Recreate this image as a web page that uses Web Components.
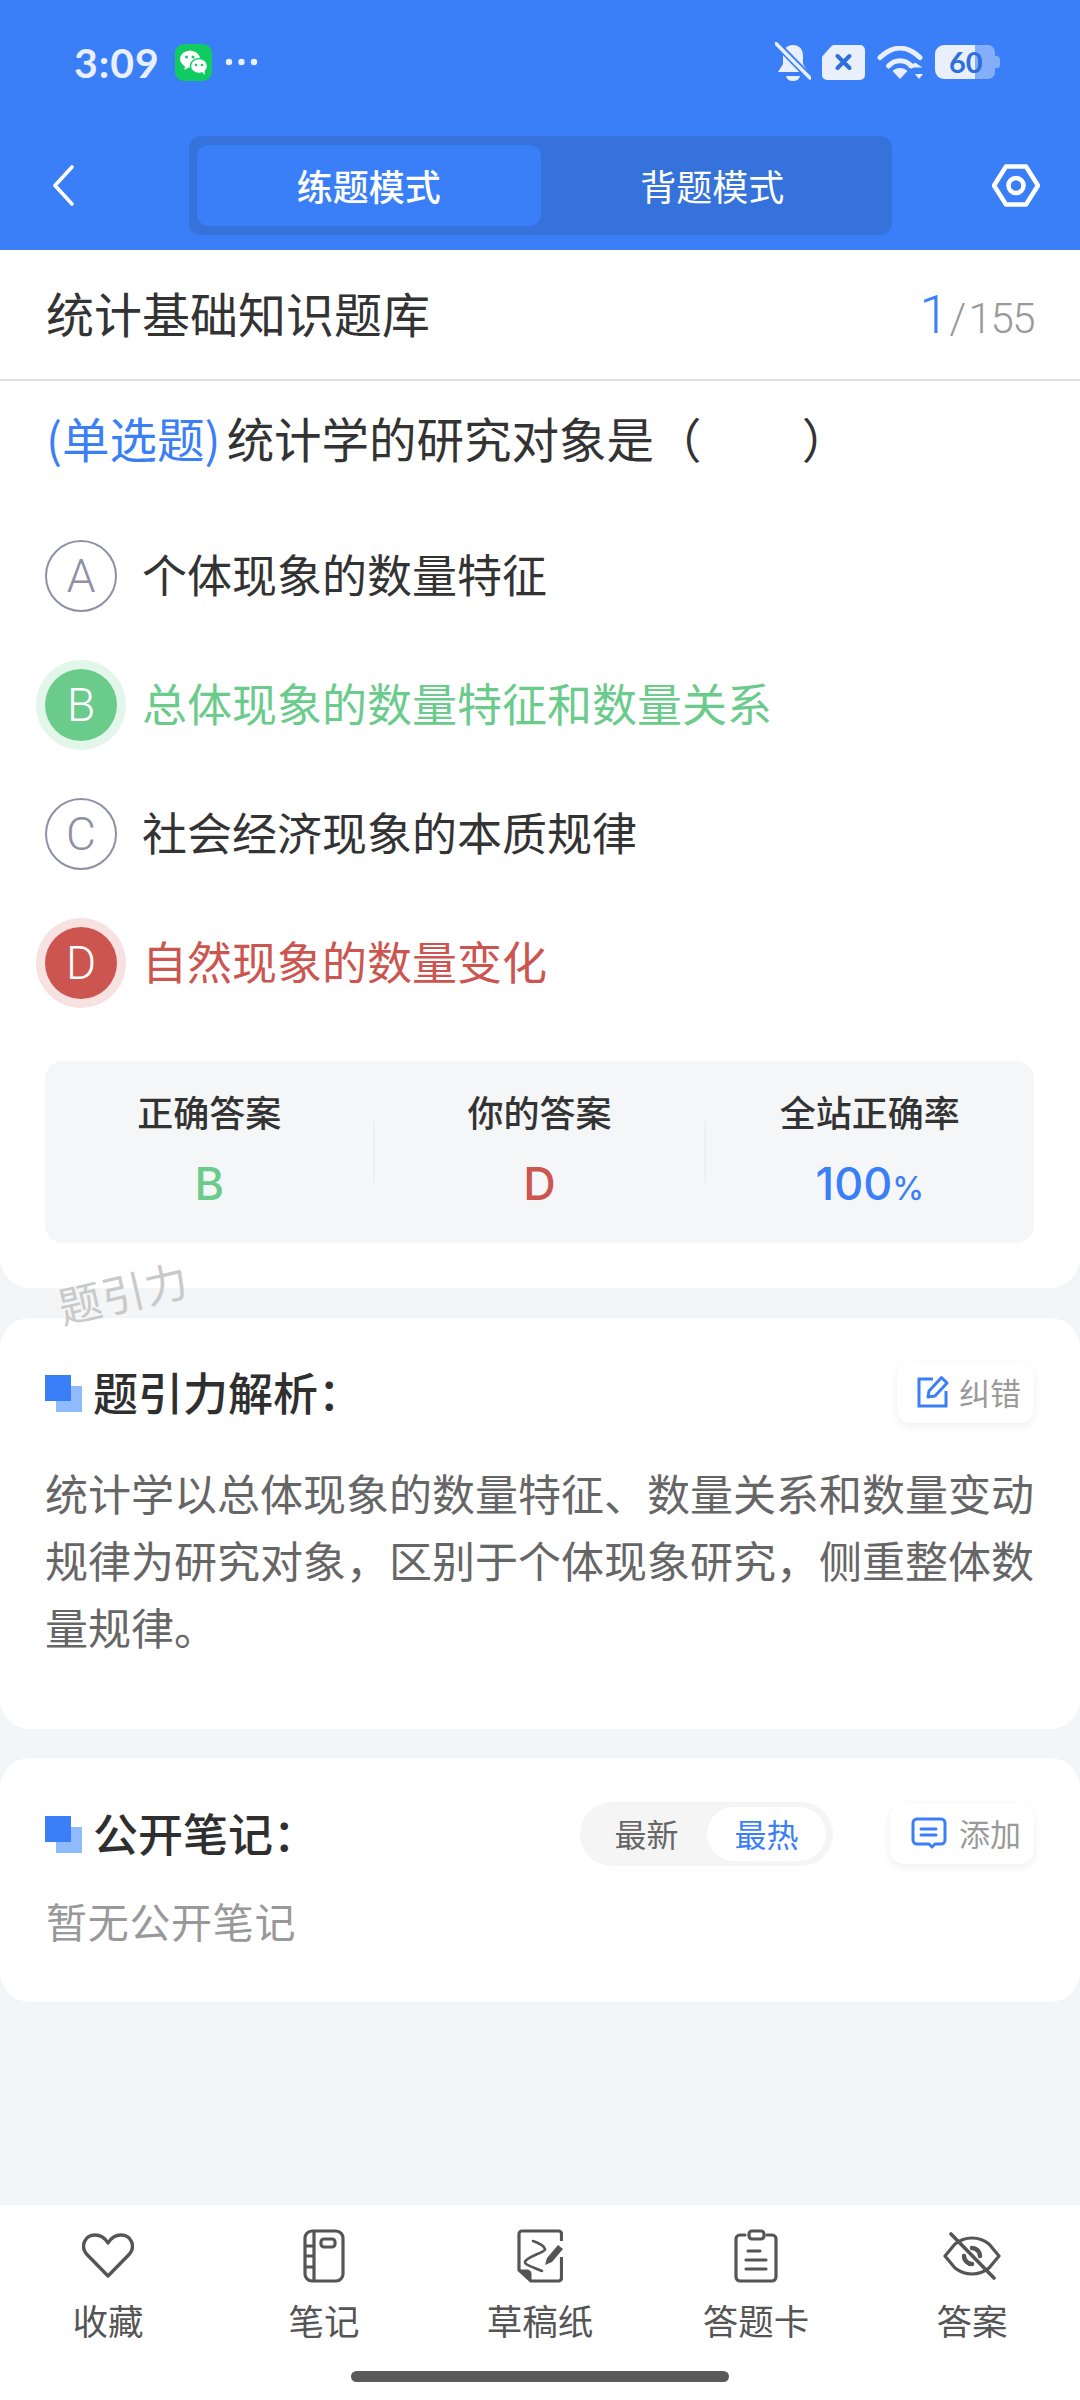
<!DOCTYPE html>
<html lang="zh">
<head>
<meta charset="utf-8">
<title>统计基础知识题库</title>
<style>
  html, body { margin: 0; padding: 0; }
  body {
    width: 1080px;
    height: 2400px;
    overflow: hidden;
    background: #f4f5f7;
    font-family: "Noto Sans CJK SC", "Noto Sans", sans-serif;
  }
  quiz-app { height: 2400px; }
</style>
</head>
<body>
<quiz-app></quiz-app>

<script>
const CJK = `"Noto Sans CJK SC", "Noto Sans", sans-serif`;

// Top blue area: status bar + mode switch
class StatusBar extends HTMLElement {
  constructor() {
    super();
    this.attachShadow({ mode: "open" });
  }
  connectedCallback() {
    this.shadowRoot.innerHTML = `
      <style>
        :host { display: flex; align-items: center; height: 124px; padding: 0 80px 0 74px; box-sizing: border-box; color: #e9effd; }
        .time { font: 700 41px/1 Lato, sans-serif; width: 88px; letter-spacing: 1px; }
        .wechat { margin-left: 13px; display: block; }
        .dots { margin-left: 13px; display: block; }
        .right { margin-left: auto; display: flex; align-items: center; }
        .right svg { display: block; }
        .sim { margin-left: 11px; }
        .wifi { margin-left: 12px; }
        .batt { margin-left: 11px; }
        .batt text { font: 700 29px Lato, sans-serif; fill: #2f6fdc; }
      </style>
      <span class="time">3:09</span>
      <svg class="wechat" width="37" height="37" viewBox="0 0 37 37">
        <rect width="37" height="37" rx="9" fill="#0fcb62"/>
        <ellipse cx="15" cy="15" rx="10" ry="8.6" fill="#fff"/>
        <path d="M10 21l-.5 5 5-3z" fill="#fff"/>
        <ellipse cx="24" cy="22" rx="8.6" ry="7.4" fill="#fff" stroke="#0fcb62" stroke-width="1.4"/>
        <path d="M27 28l3 3-.4-5z" fill="#fff"/>
        <circle cx="11.5" cy="13" r="1.5" fill="#0fcb62"/><circle cx="18" cy="13" r="1.5" fill="#0fcb62"/>
        <circle cx="21" cy="21" r="1.3" fill="#0fcb62"/><circle cx="27" cy="21" r="1.3" fill="#0fcb62"/>
      </svg>
      <svg class="dots" width="33" height="8" viewBox="0 0 33 8" fill="#e9effd">
        <circle cx="4" cy="4" r="3.2"/><circle cx="16.5" cy="4" r="3.2"/><circle cx="29" cy="4" r="3.2"/>
      </svg>
      <div class="right">
        <svg width="36" height="40" viewBox="0 0 36 40">
          <path d="M18 3c7 0 10 5 10 11v8l5 8H3l5-8v-8c0-6 3-11 10-11z" fill="#e9effd"/>
          <path d="M11 34h14c-1 4-4 5-7 5s-6-1-7-5z" fill="#e9effd"/>
          <path d="M-2 -2L35 36" stroke="#3b7ff8" stroke-width="7"/>
          <path d="M1 1.500L35 36" stroke="#e9effd" stroke-width="3.400" stroke-linecap="round"/>
        </svg>
        <svg class="sim" width="43" height="35" viewBox="0 0 43 35">
          <path d="M12 0h26a5 5 0 0 1 5 5v25a5 5 0 0 1-5 5H5a5 5 0 0 1-5-5V13a4 4 0 0 1 1.500-3L9 1.500A4 4 0 0 1 12 0z" fill="#e9effd"/>
          <path d="M15.500 11l12 12M27.500 11l-12 12" stroke="#2f6fdc" stroke-width="4" stroke-linecap="round"/>
        </svg>
        <svg class="wifi" width="47" height="33" viewBox="0 0 47 33">
          <path d="M3 11.500C16 -1 30 -1 43 11.500" fill="none" stroke="#e9effd" stroke-width="5" stroke-linecap="round"/>
          <path d="M11.500 20C18 13 28 13 34.500 20" fill="none" stroke="#e9effd" stroke-width="5" stroke-linecap="round"/>
          <path d="M15.500 25c4-4 11-4 15 0l-7.500 8z" fill="#e9effd"/>
          <path d="M38.500 20.500l8 5.500h-16z" fill="#e9effd" transform="translate(3.500 -2) scale(.9)"/>
          <path d="M38 28h8l-4 5z" fill="#e9effd"/>
        </svg>
        <svg class="batt" width="65" height="34" viewBox="0 0 65 34">
          <path d="M40 0h13a7 7 0 0 1 7 7v20a7 7 0 0 1-7 7H40z" fill="#e9effd" opacity=".42"/>
          <path d="M60 11h1.500a3.500 3.500 0 0 1 3.500 3.500v5a3.500 3.500 0 0 1-3.500 3.500H60z" fill="#e9effd" opacity=".42"/>
          <path d="M9 0h31v34H9a9 9 0 0 1-9-9V9a9 9 0 0 1 9-9z" fill="#e9effd"/>
          <text x="14" y="28">60</text>
        </svg>
      </div>
    `;
  }
}

class ModeHeader extends HTMLElement {
  constructor() {
    super();
    this.attachShadow({ mode: "open" });
  }
  connectedCallback() {
    this.shadowRoot.innerHTML = `
      <style>
        :host { display: block; background: #3b7ff8; height: 250px; font-family: ${CJK}; }
        .row { display: flex; align-items: center; height: 99px; margin-top: 12px; padding: 0 40px 0 52px; }
        .back, .gear { display: block; flex: none; }
        .seg {
          display: flex; box-sizing: border-box; width: 703px; height: 99px; margin-left: 115px;
          padding: 9px 8px; gap: 0; background: #3672dc; border-radius: 12px;
        }
        .seg span { display: flex; align-items: center; justify-content: center; width: 344px; padding-bottom: 2px; box-sizing: border-box; border-radius: 12px; color: #fff; font-size: 36px; font-weight: 400; }
        .seg .on { background: #3b7ff8; font-weight: 500; }
        .gear { margin-left: 100px; }
      </style>
      <status-bar></status-bar>
      <div class="row">
        <svg class="back" width="22" height="41" viewBox="0 0 22 41"><path d="M20 2L3 20.500 20 39" fill="none" stroke="#fff" stroke-width="3.600" stroke-linecap="round" stroke-linejoin="round"/></svg>
        <div class="seg"><span class="on">练题模式</span><span>背题模式</span></div>
        <svg class="gear" width="48" height="43" viewBox="0 0 48 43"><path d="M14 2.500h20l12 19-12 19H14L2 21.500z" fill="none" stroke="#fff" stroke-width="4.500" stroke-linejoin="round"/><circle cx="24" cy="21.500" r="7.500" fill="none" stroke="#fff" stroke-width="4.500"/></svg>
      </div>
    `;
  }
}

// One answer option: letter circle + text
class QuizOption extends HTMLElement {
  constructor() {
    super();
    this.attachShadow({ mode: "open" });
  }
  connectedCallback() {
    const letter = this.getAttribute("letter");
    this.shadowRoot.innerHTML = `
      <style>
        :host { display: flex; align-items: center; height: 129px; --c: #333; --ring: none; }
        :host([state="right"]) { --c: #6acb8b; }
        :host([state="wrong"]) { --c: #cc5550; }
        .dot {
          flex: none; box-sizing: border-box; width: 72px; height: 72px; border-radius: 50%;
          display: flex; align-items: center; justify-content: center;
          border: 2px solid #8f90a6; color: #8f90a6; font: 300 46px/1 Roboto, sans-serif;
        }
        :host([state="right"]) .dot { background: #6acb8b; border: 0; color: #fff; box-shadow: 0 0 0 9px #e2f6e9; }
        :host([state="wrong"]) .dot { background: #cc5550; border: 0; color: #fff; box-shadow: 0 0 0 9px #f7e1e1; }
        .txt { margin-left: 25px; padding-bottom: 5px; font-size: 45px; line-height: 1; color: var(--c); }
      </style>
      <span class="dot">${letter}</span>
      <span class="txt"><slot></slot></span>
    `;
  }
}

class AnswerStat extends HTMLElement {
  constructor() {
    super();
    this.attachShadow({ mode: "open" });
  }
  connectedCallback() {
    this.shadowRoot.innerHTML = `
      <style>
        :host { display: flex; flex: 1; flex-direction: column; align-items: center; color: #333; }
        .label { font-size: 36px; font-weight: 500; line-height: 40px; margin-top: 30px; }
        .val { font: 500 45px/50px Inter, Lato, sans-serif; margin-top: 28px; color: var(--val, #333); }
        ::slotted(small) { font-size: 32px; }
      </style>
      <span class="label">${this.getAttribute("label")}</span>
      <span class="val"><slot></slot></span>
    `;
  }
}

// White card with rounded corners
class WhiteCard extends HTMLElement {
  constructor() {
    super();
    this.attachShadow({ mode: "open" });
    this.shadowRoot.innerHTML = `
      <style>
        :host { display: block; background: #fff; border-radius: 30px; box-sizing: border-box; }
        :host([flat]) { border-radius: 0 0 30px 30px; }
      </style>
      <slot></slot>
    `;
  }
}

// Blue double-square section title
class SectionTitle extends HTMLElement {
  constructor() {
    super();
    this.attachShadow({ mode: "open" });
    this.shadowRoot.innerHTML = `
      <style>
        :host { display: flex; align-items: center; font-size: 45px; font-weight: 500; color: #2f2f2f; line-height: 1; }
        .mark { position: relative; flex: none; width: 37px; height: 37px; margin-right: 11px; }
        .mark i { position: absolute; display: block; width: 26px; height: 26px; }
        .mark .a { right: 0; bottom: 0; background: #8fbafc; }
        .mark .b { left: 0; top: 0; background: #3b7ff8; }
        .txt { padding-bottom: 3px; }
      </style>
      <span class="mark"><i class="a"></i><i class="b"></i></span>
      <span class="txt"><slot></slot></span>
    `;
  }
}

class ActionChip extends HTMLElement {
  constructor() {
    super();
    this.attachShadow({ mode: "open" });
    this.shadowRoot.innerHTML = `
      <style>
        :host {
          display: flex; align-items: center; justify-content: flex-end; box-sizing: border-box; height: 60px; padding: 0 13px 3px 0;
          background: #fff; border-radius: 14px; box-shadow: 0 3px 10px rgba(0,0,0,.07);
          font-size: 31px; color: #9a9a9a; line-height: 1; gap: var(--gap, 9px);
        }
        ::slotted(svg) { display: block; flex: none; }
      </style>
      <slot></slot>
    `;
  }
}

class SortToggle extends HTMLElement {
  constructor() {
    super();
    this.attachShadow({ mode: "open" });
    this.shadowRoot.innerHTML = `
      <style>
        :host { display: flex; box-sizing: border-box; width: 253px; height: 64px; padding: 5px 7px 5px 0; background: #f5f5f5; border-radius: 32px; font-size: 32px; line-height: 1; }
        span { display: flex; align-items: center; justify-content: center; padding-bottom: 2px; box-sizing: border-box; }
        .off { width: 127px; color: #666; padding-left: 6px; }
        .on { width: 119px; background: #fff; border-radius: 27px; color: #3b7ff8; }
      </style>
      <span class="off">最新</span><span class="on">最热</span>
    `;
  }
}

class TabItem extends HTMLElement {
  constructor() {
    super();
    this.attachShadow({ mode: "open" });
    this.shadowRoot.innerHTML = `
      <style>
        :host { display: flex; flex: 1; flex-direction: column; align-items: center; color: #555; }
        .ico { display: flex; align-items: center; justify-content: center; height: 54px; }
        .lb { font-size: 35.500px; line-height: 40px; margin-top: 17px; }
      </style>
      <span class="ico"><slot name="icon"></slot></span>
      <span class="lb"><slot></slot></span>
    `;
  }
}

class TabBar extends HTMLElement {
  constructor() {
    super();
    this.attachShadow({ mode: "open" });
    this.shadowRoot.innerHTML = `
      <style>
        :host { display: block; box-sizing: border-box; height: 195px; background: #fff; padding-top: 24px; }
        .items { display: flex; height: 111px; }
        .home { width: 378px; height: 11px; margin: 31px auto 0; border-radius: 6px; background: #5a5a5a; }
      </style>
      <div class="items"><slot></slot></div>
      <div class="home"></div>
    `;
  }
}

class QuizApp extends HTMLElement {
  constructor() {
    super();
    this.attachShadow({ mode: "open" });
    this.shadowRoot.innerHTML = `
      <style>
        :host { display: flex; flex-direction: column; position: relative; width: 1080px; height: 2400px; background: #f4f5f7; font-family: ${CJK}; }
        .head { display: flex; align-items: center; justify-content: space-between; box-sizing: border-box; height: 131px; padding: 0 46px; border-bottom: 2px solid #dedfe1; }
        .book { font-size: 48px; color: #333; line-height: 1; padding-bottom: 5px; }
        .count { display: flex; align-items: baseline; font-family: Roboto, sans-serif; font-weight: 300; font-size: 42px; letter-spacing: -1.500px; color: #999; }
        .count b { font-weight: 300; font-size: 53px; color: #3b7ff8; margin-right: 2px; }
        .count i { font-style: normal; margin-right: 4px; }
        .q { padding: 29px 46px 0; height: 56px; font-size: 47.500px; line-height: 56px; color: #333; white-space: nowrap; }
        .q em { font-style: normal; color: #3b7ff8; margin-right: 6px; }
        .q .blank { display: inline-block; width: 100px; }
        .opts { display: block; margin: 45px 45px 0; }
        .stats { display: flex; position: relative; height: 182px; margin: 34px 46px 0 45px; background: #f5f6f8; border-radius: 18px; }
        .stats s { align-self: center; width: 2px; height: 60px; background: #eeeff1; flex: none; margin-top: 0; }
        .first { height: 1038px; flex: none; }
        .parse { margin-top: 30px; height: 411px; padding: 45px 46px 0 45px; flex: none; }
        .notes { margin-top: 29px; height: 244px; padding: 44px 46px 0 45px; flex: none; }
        .bar { display: flex; align-items: center; justify-content: space-between; }
        .para { width: 992px; margin: 36px 0 0 0; font-size: 43px; line-height: 67px; color: #666; }
        .empty { margin: 26px 0 0 1px; font-size: 41px; line-height: 56px; color: #999; letter-spacing: .7px; }
        .tools { display: flex; align-items: center; }
        .spacer { flex: 1; }
        .mark {
          position: absolute; left: 57px; top: 1270px; font-size: 43px; line-height: 1; color: #c9c9c9;
          transform: rotate(-13deg); letter-spacing: 1px;
        }
      </style>
      <mode-header></mode-header>
      <white-card flat class="first">
        <div class="head">
          <span class="book">统计基础知识题库</span>
          <span class="count"><b>1</b><i>/</i>155</span>
        </div>
        <div class="q"><em>(单选题)</em>统计学的研究对象是（<span class="blank"></span>）</div>
        <div class="opts">
          <quiz-option letter="A">个体现象的数量特征</quiz-option>
          <quiz-option letter="B" state="right">总体现象的数量特征和数量关系</quiz-option>
          <quiz-option letter="C">社会经济现象的本质规律</quiz-option>
          <quiz-option letter="D" state="wrong">自然现象的数量变化</quiz-option>
        </div>
        <div class="stats">
          <answer-stat label="正确答案" style="--val:#6acb8b">B</answer-stat>
          <s></s>
          <answer-stat label="你的答案" style="--val:#cc5550">D</answer-stat>
          <s></s>
          <answer-stat label="全站正确率" style="--val:#3b7ff8">100<small>%</small></answer-stat>
        </div>
      </white-card>
      <white-card class="parse">
        <div class="bar">
          <section-title>题引力解析：</section-title>
          <action-chip style="width:137px">
            <svg width="33" height="33" viewBox="0 0 33 33" fill="none" stroke="#3b7ff8" stroke-width="3"><path d="M16 4H2v27h27V16"/><path d="M12 16L24.500 2.500 30 8 18 21l-7 1z" stroke-linejoin="round"/></svg>
            纠错
          </action-chip>
        </div>
        <div class="para">统计学以总体现象的数量特征、数量关系和数量变动规律为研究对象，区别于个体现象研究，侧重整体数量规律。</div>
      </white-card>
      <white-card class="notes">
        <div class="bar">
          <section-title>公开笔记：</section-title>
          <div class="tools">
            <sort-toggle></sort-toggle>
            <action-chip style="margin-left:57px;width:144px;--gap:12px">
              <svg width="36" height="32" viewBox="0 0 36 32" fill="none" stroke="#3b7ff8" stroke-width="3"><path d="M6 2h24a4 4 0 0 1 4 4v17a4 4 0 0 1-4 4h-6l-3 3-3-3H6a4 4 0 0 1-4-4V6a4 4 0 0 1 4-4z" stroke-linejoin="round"/><path d="M10 12h15M10 18h15" stroke-linecap="round"/></svg>
              添加
            </action-chip>
          </div>
        </div>
        <div class="empty">暂无公开笔记</div>
      </white-card>
      <div class="spacer"></div>
      <tab-bar>
        <tab-item>
          <svg slot="icon" width="52" height="46" viewBox="0 0 52 46" fill="none" stroke="#555" stroke-width="3.400" stroke-linejoin="round"><path d="M26 43L4.500 21C-2 13 3 2 13 2c6 0 10 3 13 8 3-5 7-8 13-8 10 0 15 11 8.500 19z"/></svg>
          收藏
        </tab-item>
        <tab-item>
          <svg slot="icon" width="42" height="54" viewBox="0 0 42 54" fill="none" stroke="#555" stroke-width="3.200"><rect x="2" y="2" width="38" height="50" rx="7"/><path d="M11 2v50M2 17h9M2 27h9M2 38h9"/><rect x="18" y="10" width="14" height="8" rx="3"/></svg>
          笔记
        </tab-item>
        <tab-item>
          <svg slot="icon" width="46" height="54" viewBox="0 0 46 54" fill="none" stroke="#555" stroke-width="3.200" stroke-linejoin="round"><path d="M44.500 12V5a3 3 0 0 0-3-3H5a3 3 0 0 0-3 3v36l12 11h27.500a3 3 0 0 0 3-3V28"/><path d="M3 41h8a4 4 0 0 1 3 3v7z" fill="#555" stroke-width="1"/><path d="M16 12c6 2 11 5 12 8 1 3-19 8-20 13-.5 3 8 5 17 9" stroke-width="2.600" stroke-linecap="round"/><path d="M28 36l2-7 11-13 5 4-11 13z" fill="#555" stroke="none"/></svg>
          草稿纸
        </tab-item>
        <tab-item>
          <svg slot="icon" width="44" height="54" viewBox="0 0 44 54" fill="none" stroke="#555" stroke-width="3.200" stroke-linecap="round"><path d="M11 6H6a4 4 0 0 0-4 4v38a4 4 0 0 0 4 4h32a4 4 0 0 0 4-4V10a4 4 0 0 0-4-4h-5"/><rect x="15" y="2" width="15" height="8" rx="3"/><path d="M14 22h12M12 31h20M12 40h20"/></svg>
          答题卡
        </tab-item>
        <tab-item>
          <svg slot="icon" width="58" height="48" viewBox="0 0 58 48" fill="none" stroke="#555" stroke-width="3.200" stroke-linecap="round"><path d="M2 24l10-12c5-4 11-6 17-6s12 2 17 6l10 12-10 12c-5 4-11 6-17 6s-12-2-17-6z" stroke-linejoin="round"/><path d="M29 16a8 8 0 0 1 8 8M29 32a8 8 0 0 1-8-8" stroke-width="4.500"/><path d="M8 2l43 44" stroke-width="3.600"/></svg>
          答案
        </tab-item>
      </tab-bar>
      <span class="mark">题引力</span>
    `;
  }
}

customElements.define("status-bar", StatusBar);
customElements.define("mode-header", ModeHeader);
customElements.define("quiz-option", QuizOption);
customElements.define("answer-stat", AnswerStat);
customElements.define("white-card", WhiteCard);
customElements.define("section-title", SectionTitle);
customElements.define("action-chip", ActionChip);
customElements.define("sort-toggle", SortToggle);
customElements.define("tab-item", TabItem);
customElements.define("tab-bar", TabBar);
customElements.define("quiz-app", QuizApp);
</script>
</body>
</html>
